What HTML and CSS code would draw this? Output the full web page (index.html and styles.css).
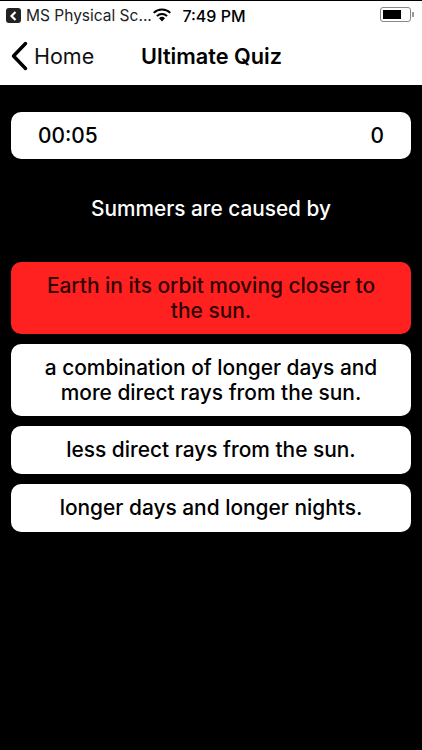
FILE: index.html
```html
<!DOCTYPE html>
<html lang="en">
<head>
    <meta charset="UTF-8">
    <meta name="viewport" content="width=device-width, initial-scale=1.0">
    <title>Ultimate Quiz</title>

    <link rel="stylesheet" href="styles.css">
</head>
<body>
    <div class="top">
        <div class="status">
            <div class="status-left">
                <span class="back-app">
                    <svg width="9" height="10" viewBox="0 0 9 10"><path d="M6.5 1 L2.5 5 L6.5 9" fill="none" stroke="#fff" stroke-width="2.2"/></svg>
                </span>
                <span class="carrier">MS Physical Sc...</span>
                <svg class="wifi" width="20" height="14" viewBox="0 0 20 14">
                    <path d="M10 13.5 L7 10.2 A4.4 4.4 0 0 1 13 10.2 Z" fill="#000"/>
                    <path d="M4.9 8.1 A7.4 7.4 0 0 1 15.1 8.1" fill="none" stroke="#000" stroke-width="2"/>
                    <path d="M1.7 4.9 A11.9 11.9 0 0 1 18.3 4.9" fill="none" stroke="#000" stroke-width="2"/>
                </svg>
            </div>
            <span class="clock">7:49 PM</span>
            <div class="status-right">
                <span class="battery"><span class="battery-level"></span></span>
                <span class="battery-cap"></span>
            </div>
        </div>
        <div class="nav">
            <div class="nav-back">
                <svg width="18" height="30" viewBox="0 0 18 30"><path d="M15.5 2.5 L3.5 15 L15.5 27.5" fill="none" stroke="#000" stroke-width="3.4" stroke-linecap="round" stroke-linejoin="round"/></svg>
                <span>Home</span>
            </div>
            <h1>Ultimate Quiz</h1>
        </div>
    </div>

    <div class="content">
        <div class="box score">
            <span>00:05</span>
            <span>0</span>
        </div>
        <p class="question">Summers are caused by</p>
        <div class="answers">
            <div class="box answer wrong">Earth in its orbit moving closer to the sun.</div>
            <div class="box answer">a combination of longer days and more direct rays from the sun.</div>
            <div class="box answer">less direct rays from the sun.</div>
            <div class="box answer">longer days and longer nights.</div>
        </div>
    </div>
</body>
</html>
```

FILE: styles.css
```css
*{
    margin: 0;
    padding: 0;
    box-sizing: border-box;
}

body{
    width: 422px;
    height: 750px;
    overflow: hidden;
    background-color: #000;
    font-family: Inter, "Liberation Sans", sans-serif;
}

.top{
    margin-top: 1px;
    height: 84px;
    background-color: #fff;
    color: #000;
}

.status{
    height: 29px;
    display: grid;
    grid-template-columns: 1fr auto 1fr;
    align-items: center;
    padding: 0 6px;
    font-size: 15.5px;
}

.status-left{
    display: flex;
    align-items: center;
    gap: 5px;
}

.back-app{
    width: 15px;
    height: 15px;
    border-radius: 3px;
    background-color: #222;
    display: flex;
    align-items: center;
    justify-content: center;
}

.carrier{
    color: #222;
    white-space: nowrap;
}

.wifi{
    margin-left: -5px;
    margin-top: -2px;
}

.clock{
    margin-left: 6px;
    font-size: 16px;
    font-weight: 500;
}

.status-right{
    display: flex;
    justify-content: flex-end;
    align-items: center;
    gap: 1px;
    padding-right: 2px;
    margin-top: -2px;
}

.battery{
    width: 31px;
    height: 15px;
    border: 1px solid #888;
    border-radius: 3px;
    padding: 2px;
    display: block;
}

.battery-level{
    display: block;
    width: 18px;
    height: 100%;
    background-color: #000;
}

.battery-cap{
    width: 2px;
    height: 5px;
    background-color: #999;
}

.nav{
    height: 52px;
    display: flex;
    align-items: center;
    padding-left: 10px;
}

.nav-back{
    width: 131px;
    display: flex;
    align-items: center;
    gap: 6px;
    font-size: 21.5px;
    color: #111;
}

.nav h1{
    font-size: 21.7px;
    font-weight: 600;
}

.content{
    padding: 27px 11px 0;
}

.box{
    background-color: #fff;
    color: #000;
    border-radius: 10px;
    font-size: 20.9px;
    font-weight: 550;
}

.score{
    height: 47px;
    display: flex;
    justify-content: space-between;
    align-items: center;
    padding: 0 27px;
}

.question{
    color: #fff;
    text-align: center;
    font-size: 20.8px;
    font-weight: 550;
    margin-top: 38px;
    line-height: 24px;
}

.answers{
    margin-top: 41px;
    display: flex;
    flex-direction: column;
    gap: 10px;
}

.answer{
    text-align: center;
    line-height: 25px;
    padding: 11px 20px;
    min-height: 48px;
}

.wrong{
    background-color: #ff2020;
    color: #300303;
}
```
